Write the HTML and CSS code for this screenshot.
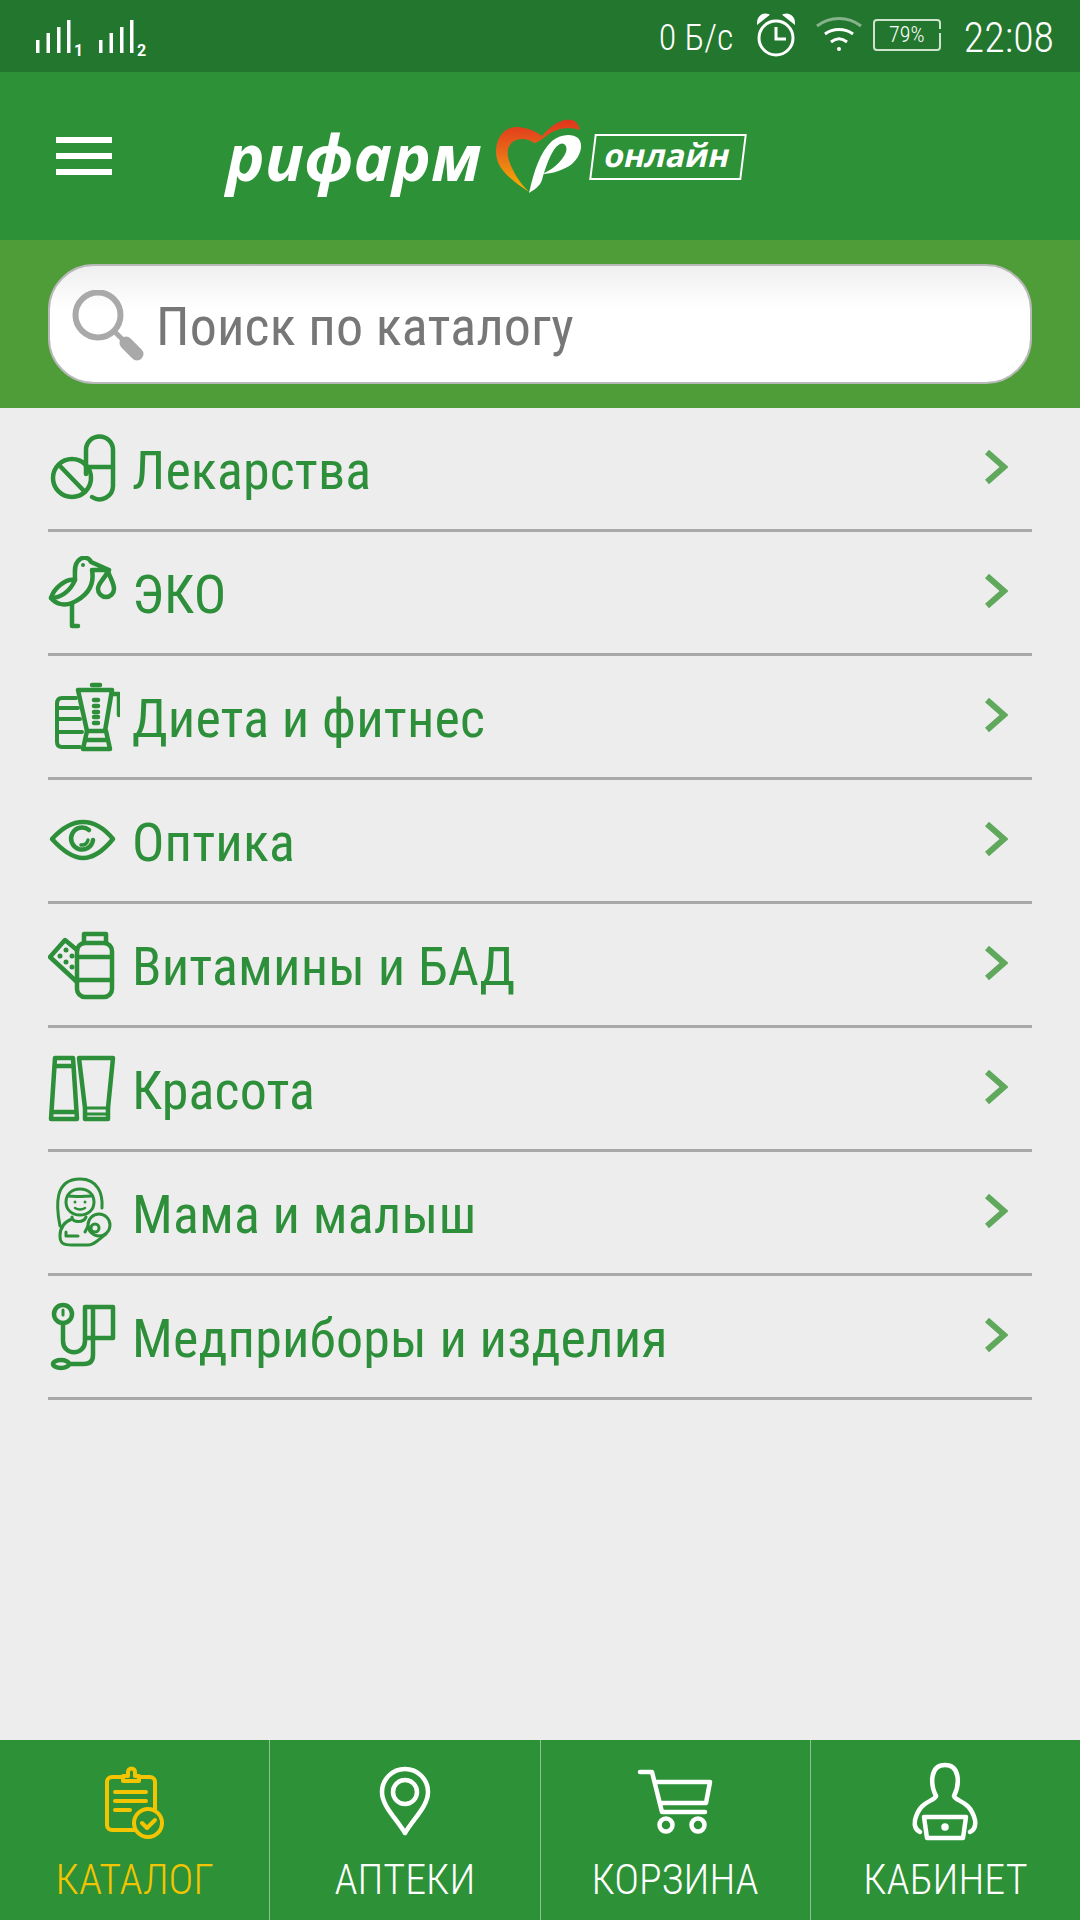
FILE: index.html
```html
<!DOCTYPE html>
<html lang="ru">
<head>
  <meta charset="UTF-8">
  <meta name="viewport" content="width=device-width, initial-scale=1.0">
  <title>Рифарм онлайн</title>
  <link rel="stylesheet" href="styles.css">
</head>
<body>

<div class="app">

  <!-- status bar -->
  <div class="status">
    <div class="signals">
      <svg width="112" height="72" viewBox="0 0 112 72" fill="#fff">
        <rect x="0" y="40" width="3.5" height="13"/><rect x="10.5" y="33" width="3.5" height="20"/><rect x="21" y="27" width="3.5" height="26"/><rect x="31" y="20" width="3.5" height="33"/>
        <text x="38" y="56" class="sim">1</text>
        <rect x="63" y="40" width="3.5" height="13"/><rect x="73.5" y="33" width="3.5" height="20"/><rect x="84" y="27" width="3.5" height="26"/><rect x="94" y="20" width="3.5" height="33"/>
        <text x="101" y="56" class="sim">2</text>
      </svg>
    </div>
    <div class="status-right">
      <span class="speed">0 Б/с</span>
      <svg class="alarm" width="40" height="46" viewBox="0 0 40 46" fill="none" stroke="#fff" stroke-width="3">
        <circle cx="20" cy="26" r="17"/>
        <path d="M20 15V27H30"/>
        <path d="M2 11C2 5 7 1 12 3L2 11ZM38 11C38 5 33 1 28 3L38 11Z" fill="#fff" stroke-width="2"/>
      </svg>
      <svg class="wifi" width="46" height="36" viewBox="0 0 46 36" fill="none" stroke="#fff" stroke-width="3">
        <path d="M1 9C14 -1 32 -1 45 9" opacity=".45"/>
        <path d="M9 17C17 11 29 11 37 17"/>
        <path d="M15 25C20 21 26 21 31 25"/>
        <circle cx="23" cy="32" r="2" fill="#fff" stroke="none"/>
      </svg>
      <div class="battery">79%</div>
      <span class="clock">22:08</span>
    </div>
  </div>

  <!-- header -->
  <div class="topbar">
    <div class="burger"><i></i><i></i><i></i></div>
    <div class="logo">
      <span class="logo-name">рифарм</span>
      <svg class="logo-heart" width="90" height="80" viewBox="0 0 90 80">
        <defs>
          <linearGradient id="heartGrad" x1="0" y1="0" x2="0" y2="1">
            <stop offset="0" stop-color="#e0341c"/>
            <stop offset=".45" stop-color="#e8691a"/>
            <stop offset="1" stop-color="#f6b500"/>
          </linearGradient>
        </defs>
        <path fill="url(#heartGrad)" d="M33 76C18 66 0 54 0 36C0 20 10 10 22 11C32 12 40 15 46 20C54 10 66 2 76 4C80 5 83 9 84 14C76 11 66 11 56 16C48 21 42 27 38 27C32 22 24 22 18 25C10 30 10 40 16 52C20 61 27 70 33 76Z"/>
        <path fill="#fff" d="M33 77C38 55 44 36 56 25C64 18 76 17 82 22C88 28 85 40 76 48C68 54 56 58 46 58C56 54 66 46 70 36C72 30 68 26 64 28C56 32 50 50 46 64C44 70 38 74 33 77Z"/>
      </svg>
      <div class="logo-badge"><span>онлайн</span></div>
    </div>
  </div>

  <!-- search -->
  <div class="search-band">
    <div class="search">
      <svg width="76" height="80" viewBox="0 0 76 80" fill="none" stroke="#a9a9a9">
        <circle cx="28" cy="25" r="22.5" stroke-width="6"/>
        <path d="M45 42L54 51" stroke-width="5"/>
        <path d="M56 53L67 64" stroke-width="13" stroke-linecap="round"/>
      </svg>
      <span class="search-text">Поиск по каталогу</span>
    </div>
  </div>

  <!-- catalog -->
  <ul class="menu">
    <li class="menu-row">
      <svg class="menu-icon" width="72" height="73" viewBox="0 0 72 73">
        <circle cx="24" cy="46" r="19"/>
        <path d="M12 34L37 60"/>
        <path d="M38 42V18a13.5 13.5 0 0 1 27 0v36a13.5 13.5 0 0 1-21 11"/>
        <path d="M38 35H65"/>
      </svg>
      <span class="menu-label">Лекарства</span>
      <svg class="chevron" width="24" height="36" viewBox="0 0 24 36"><path d="M3 3L20 18L3 33"/></svg>
    </li>
    <li class="menu-row">
      <svg class="menu-icon" width="72" height="73" viewBox="0 0 72 73">
        <path d="M27 24C27 16 26 9 30 5C34 0 41 1 43 6L61 14L44 14C46 25 44 38 24 47C16 50 8 48 3 42C6 32 18 22 27 24"/>
        <path d="M3 42C12 42 22 36 27 24"/>
        <path d="M24 47V70H30"/>
        <path d="M60 15C56 24 50 27 50 33A8 8 0 0 0 66 33C66 27 62 22 60 15Z"/>
        <circle cx="35" cy="9" r="1" stroke-width="2"/>
      </svg>
      <span class="menu-label">ЭКО</span>
      <svg class="chevron" width="24" height="36" viewBox="0 0 24 36"><path d="M3 3L20 18L3 33"/></svg>
    </li>
    <li class="menu-row">
      <svg class="menu-icon" width="72" height="73" viewBox="0 0 72 73">
        <path d="M44 5H52M30 10H64M30 10L39 51H57L64 10M64 14H71V35"/>
        <path d="M46 20H50M46 26H50M46 32H50M46 37H50M46 43H50"/>
        <path d="M39 51L35 69H62L58 51M37 60H60"/>
        <path d="M28 18H14Q9 18 9 24V62Q9 67 14 67H32M9 28H30M9 39H32M9 52H34" stroke-width="4"/>
      </svg>
      <span class="menu-label">Диета и фитнес</span>
      <svg class="chevron" width="24" height="36" viewBox="0 0 24 36"><path d="M3 3L20 18L3 33"/></svg>
    </li>
    <li class="menu-row">
      <svg class="menu-icon" width="72" height="73" viewBox="0 0 72 73">
        <path d="M4 35C14 24 24 18 35 18C46 18 56 24 65 35C56 46 46 54 35 54C24 54 14 46 4 35Z"/>
        <path d="M41 26A11 11 0 1 0 45 36"/>
        <path d="M40 36A6 6 0 0 1 33 41" stroke-width="3.5"/>
      </svg>
      <span class="menu-label">Оптика</span>
      <svg class="chevron" width="24" height="36" viewBox="0 0 24 36"><path d="M3 3L20 18L3 33"/></svg>
    </li>
    <li class="menu-row">
      <svg class="menu-icon" width="72" height="73" viewBox="0 0 72 73">
        <path d="M36 15V6H58V15"/>
        <rect x="29" y="15" width="35" height="54" rx="8"/>
        <path d="M29 29H64M29 52H64"/>
        <path d="M29 22L17 12L2 29L29 54"/>
        <g class="dots"><circle cx="12" cy="28" r="2.5"/><circle cx="18" cy="22" r="2.5"/><circle cx="24" cy="28" r="2.5"/><circle cx="18" cy="34" r="2.5"/><circle cx="24" cy="39" r="2.5"/></g>
      </svg>
      <span class="menu-label">Витамины и БАД</span>
      <svg class="chevron" width="24" height="36" viewBox="0 0 24 36"><path d="M3 3L20 18L3 33"/></svg>
    </li>
    <li class="menu-row">
      <svg class="menu-icon" width="72" height="73" viewBox="0 0 72 73">
        <path d="M7 6H25L29 67H3Z"/>
        <path d="M7 14H25M4 60H28"/>
        <path d="M31 6H65L60 56V67H37V56Z"/>
        <path d="M37 56H60M37 62H60" stroke-width="3"/>
      </svg>
      <span class="menu-label">Красота</span>
      <svg class="chevron" width="24" height="36" viewBox="0 0 24 36"><path d="M3 3L20 18L3 33"/></svg>
    </li>
    <li class="menu-row">
      <svg class="menu-icon" width="72" height="73" viewBox="0 0 72 73">
        <g stroke-width="3">
          <path d="M12 50C8 30 6 3 32 3C50 3 55 18 54 32"/>
          <path d="M18 26C18 18 24 13 32 13C40 13 46 18 46 26C46 34 40 39 32 39C24 39 18 34 18 26Z"/>
          <path d="M20 20C28 21 38 20 44 20"/>
          <path d="M24 41C24 47 36 47 38 41"/>
          <path d="M24 43C16 46 12 52 12 60C12 68 16 69 24 69H40C46 69 50 64 58 58"/>
          <path d="M18 56V60H30"/>
          <circle cx="51" cy="49" r="11"/>
          <circle cx="47" cy="52" r="4"/>
          <path d="M40 50L37 56"/>
        </g>
        <g class="dots"><circle cx="27" cy="26" r="1.5"/><circle cx="37" cy="26" r="1.5"/></g>
        <path d="M27 32Q32 35 37 32" stroke-width="2.5"/>
      </svg>
      <span class="menu-label">Мама и малыш</span>
      <svg class="chevron" width="24" height="36" viewBox="0 0 24 36"><path d="M3 3L20 18L3 33"/></svg>
    </li>
    <li class="menu-row">
      <svg class="menu-icon" width="72" height="73" viewBox="0 0 72 73">
        <circle cx="15" cy="14" r="9"/>
        <path d="M15 10V15" stroke-width="3"/>
        <path d="M15 24V41C15 56 37 56 37 41V8"/>
        <path d="M37 7H65V38H37M45 7V38"/>
        <path d="M45 38V55Q45 64 36 64H22"/>
        <ellipse cx="13" cy="64" rx="8" ry="4"/>
      </svg>
      <span class="menu-label">Медприборы и изделия</span>
      <svg class="chevron" width="24" height="36" viewBox="0 0 24 36"><path d="M3 3L20 18L3 33"/></svg>
    </li>
  </ul>

  <!-- bottom tabs -->
  <div class="tabs">
    <div class="tab tab-active">
      <svg class="tab-icon" width="90" height="84" viewBox="0 0 90 84">
        <path d="M33 17H22a5 5 0 0 0-5 5V65a5 5 0 0 0 5 5H44"/>
        <path d="M49 17H60a5 5 0 0 1 5 5V49"/>
        <path d="M33 21V16H38V12a3.5 3.5 0 0 1 7 0V16H49V21Z"/>
        <path d="M25 32H56M25 41H56M25 50H40"/>
        <circle cx="58" cy="63" r="14"/>
        <path d="M52 63L57 68L65 60"/>
      </svg>
      <span class="tab-label">КАТАЛОГ</span>
    </div>
    <div class="tab">
      <svg class="tab-icon" width="90" height="84" viewBox="0 0 90 84">
        <path d="M45 73C36 58 22 46 22 32A23 23 0 0 1 68 32C68 46 54 58 45 73Z"/>
        <circle cx="45" cy="32" r="12"/>
      </svg>
      <span class="tab-label">АПТЕКИ</span>
    </div>
    <div class="tab">
      <svg class="tab-icon" width="90" height="84" viewBox="0 0 90 84">
        <path d="M10 12H22L32 52H75"/>
        <path d="M25 22H80L76 43H30"/>
        <circle cx="36" cy="65" r="6.5"/>
        <circle cx="68" cy="65" r="6.5"/>
      </svg>
      <span class="tab-label">КОРЗИНА</span>
    </div>
    <div class="tab">
      <svg class="tab-icon" width="90" height="84" viewBox="0 0 90 84">
        <path d="M36 36C30 24 30 5 45 5C60 5 60 24 54 36C56 42 70 40 75 60C76 66 74 70 70 72"/>
        <path d="M36 36C34 42 20 40 15 60C14 66 16 70 20 72"/>
        <path d="M24 57H66L63 78H27Z"/>
        <circle class="tab-dot" cx="45" cy="67" r="1.5"/>
      </svg>
      <span class="tab-label">КАБИНЕТ</span>
    </div>
  </div>

</div>

</body>
</html>
```

FILE: styles.css
```css
* { box-sizing: border-box; }
html, body { margin: 0; padding: 0; }
body { font-family: Roboto, "Liberation Sans", sans-serif; background: #ededed; }

.app { width: 1080px; height: 1920px; display: flex; flex-direction: column; overflow: hidden; background: #ededed; }

/* status bar */
.status { height: 72px; background: #23762d; color: #fff; display: flex; justify-content: space-between; padding: 0 26px 0 36px; }
.signals svg { display: block; }
.sim { font-size: 16px; font-weight: 700; font-family: Roboto, sans-serif; }
.status-right { display: flex; align-items: center; }
.speed { font-size: 36px; font-weight: 350; font-stretch: 75%; width: 97px; padding-top: 4px; }
.alarm { margin-bottom: 3px; margin-right: 20px; }
.wifi { margin-bottom: 3px; margin-right: 11px; }
.battery { position: relative; width: 68px; height: 32px; border: 2px solid #cfe3cd; border-radius: 4px; margin-bottom: 3px; margin-right: 23px; font-size: 22px; font-weight: 300; font-stretch: 75%; text-align: center; line-height: 28px; }
.battery::after { content: ""; position: absolute; right: -2px; top: 8px; width: 2px; height: 4px; background: #23762d; }
.clock { font-size: 42px; font-weight: 350; font-stretch: 75%; padding-top: 3px; }

/* header */
.topbar { height: 168px; background: #2d9138; display: flex; align-items: center; padding-left: 56px; }
.burger { width: 56px; display: flex; flex-direction: column; gap: 10px; }
.burger i { display: block; height: 6px; background: #fff; }
.logo { display: flex; align-items: center; margin-left: 112px; color: #fff; }
.logo-name { width: 272px; padding-left: 2px; font-family: "Open Sans", sans-serif; font-weight: 700; font-style: italic; font-size: 65px; line-height: 80px; }
.logo-heart { display: block; }
.logo-badge { width: 152px; height: 46px; margin-left: 6px; margin-top: 2px; border: 2px solid #fff; transform: skewX(-7deg); display: flex; align-items: center; justify-content: center; }
.logo-badge span { font-family: "Open Sans", sans-serif; font-weight: 700; font-size: 32px; transform: skewX(-6deg); line-height: 1; margin-top: -4px; }

/* search */
.search-band { height: 168px; background: #4f9d38; padding: 24px 48px 0; }
.search { height: 120px; border: 2px solid #b9b9b9; border-radius: 46px; background: linear-gradient(#efefef, #fff 38%); display: flex; align-items: center; padding-left: 20px; }
.search svg { display: block; margin-top: 12px; }
.search-text { margin-left: 10px; font-size: 54px; font-stretch: 75%; letter-spacing: .15px; color: #777; line-height: 1; padding-top: 5px; }

/* menu */
.menu { list-style: none; margin: 0; padding: 0 48px; flex: 1; }
.menu-row { height: 124px; border-bottom: 3px solid #a9a9a9; display: flex; align-items: center; }
.menu-icon { display: block; flex: none; fill: none; stroke: #2d8f3a; stroke-width: 4.5; stroke-linejoin: round; stroke-linecap: round; }
.menu-icon .dots { fill: #2d8f3a; stroke: none; }
.menu-label { flex: 1; margin-left: 12px; font-size: 54px; font-stretch: 75%; letter-spacing: .15px; color: #2d8f3a; line-height: 1; padding-top: 5px; }
.chevron { display: block; margin-right: 24px; margin-bottom: 3px; fill: none; stroke: #5fa85c; stroke-width: 6; }

/* tabs */
.tabs { height: 180px; background: #2d9138; display: flex; }
.tab { flex: 1; display: flex; flex-direction: column; align-items: center; padding-top: 20px; border-left: 1px solid #8cc191; color: #fff; }
.tab:first-child { border-left: none; }
.tab-icon { display: block; fill: none; stroke: #fff; stroke-width: 4.5; stroke-linejoin: round; stroke-linecap: round; }
.tab-dot { fill: #fff; }
.tab-label { font-size: 42px; font-weight: 350; font-stretch: 75%; line-height: 1; margin-top: 15px; }
.tab-active { color: #f5c400; }
.tab-active .tab-icon { stroke: #f5c400; stroke-width: 4; }
```
